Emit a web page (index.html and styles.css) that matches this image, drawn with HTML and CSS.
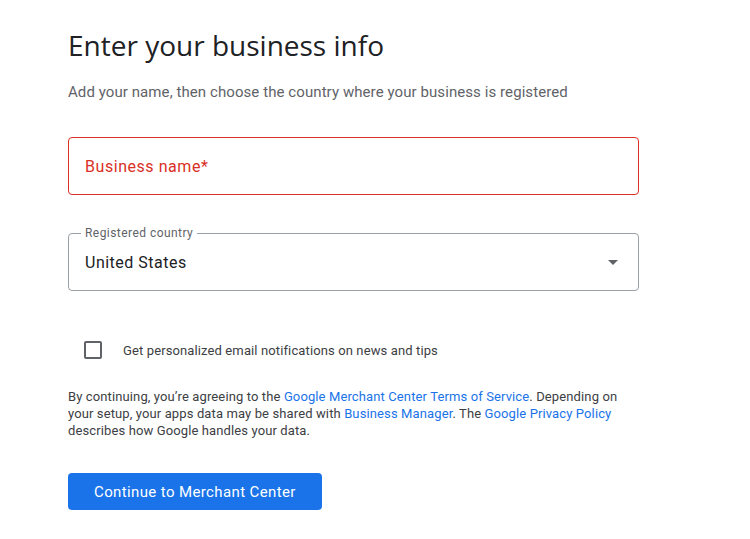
FILE: index.html
```html
<!DOCTYPE html>
<html lang="en">
<head>
<meta charset="utf-8">
<title>Enter your business info</title>
<link rel="stylesheet" href="styles.css">
</head>
<body>
<main class="page">
  <h1 class="title">Enter your business info</h1>
  <p class="subtitle">Add your name, then choose the country where your business is registered</p>

  <div class="field field-error">
    <span class="field-placeholder">Business name*</span>
  </div>

  <div class="field field-select">
    <span class="field-label">Registered country</span>
    <span class="field-value">United States</span>
    <span class="select-arrow"></span>
  </div>

  <label class="check-row">
    <span class="checkbox"></span>
    <span class="check-text">Get personalized email notifications on news and tips</span>
  </label>

  <p class="terms">By continuing, you’re agreeing to the <a href="#">Google Merchant Center Terms of Service</a>. Depending on your setup, your apps data may be shared with <a href="#">Business Manager</a>. The <a href="#">Google Privacy Policy</a> describes how Google handles your data.</p>

  <button class="primary-btn" type="button">Continue to Merchant Center</button>
</main>
</body>
</html>
```

FILE: styles.css
```css
html, body {
  margin: 0;
  padding: 0;
  background: #ffffff;
}

body {
  font-family: Roboto, "Liberation Sans", Arial, sans-serif;
  color: #202124;
}

.page {
  display: flex;
  flex-direction: column;
  align-items: flex-start;
  padding: 25px 0 0 68px;
  width: 571px;
}

.title {
  margin: 0;
  font-family: "Open Sans", Roboto, sans-serif;
  font-weight: 400;
  font-size: 28px;
  line-height: 40px;
  color: #202124;
  letter-spacing: 0;
}

.subtitle {
  margin: 17px 0 0;
  font-size: 15px;
  line-height: 20px;
  color: #5f6368;
  letter-spacing: 0.08px;
}

.field {
  position: relative;
  box-sizing: border-box;
  width: 571px;
  height: 58px;
  border: 1px solid #9aa0a6;
  border-radius: 4px;
  display: flex;
  align-items: center;
  padding: 0 16px;
}

.field-error {
  margin-top: 35px;
  border-color: #d93025;
}

.field-placeholder {
  font-size: 16px;
  color: #d93025;
  letter-spacing: 0.55px;
}

.field-select {
  margin-top: 38px;
  justify-content: space-between;
}

.field-label {
  position: absolute;
  left: 12px;
  top: -8px;
  padding: 0 4px;
  background: #ffffff;
  font-size: 12px;
  line-height: 14px;
  color: #5f6368;
  letter-spacing: 0.45px;
}

.field-value {
  font-size: 16px;
  color: #202124;
  letter-spacing: 0.5px;
}

.select-arrow {
  width: 0;
  height: 0;
  border-left: 5px solid transparent;
  border-right: 5px solid transparent;
  border-top: 5px solid #5f6368;
  margin-right: 4px;
}

.check-row {
  display: flex;
  align-items: center;
  gap: 21px;
  margin: 50px 0 0 16px;
}

.checkbox {
  box-sizing: border-box;
  width: 18px;
  height: 18px;
  border: 2px solid #5f6368;
  border-radius: 2px;
}

.check-text {
  font-size: 13px;
  color: #3c4043;
  letter-spacing: 0.12px;
}

.terms {
  margin: 29px 0 0;
  font-size: 13px;
  line-height: 17px;
  color: #3c4043;
  letter-spacing: 0.12px;
}

.terms a {
  color: #1a73e8;
  text-decoration: none;
}

.primary-btn {
  margin-top: 34px;
  height: 37px;
  padding: 0 26px;
  border: none;
  border-radius: 4px;
  background: #1a73e8;
  color: #ffffff;
  font-family: Roboto, "Liberation Sans", sans-serif;
  font-size: 15px;
  letter-spacing: 0.38px;
  cursor: pointer;
}
```
